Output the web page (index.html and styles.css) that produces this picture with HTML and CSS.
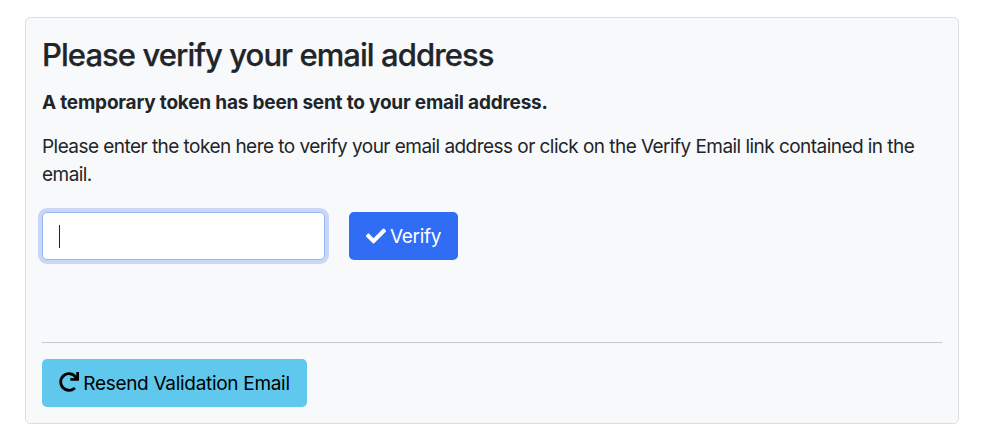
FILE: index.html
```html
<!DOCTYPE html>
<html lang="en">
<head>
<meta charset="utf-8">
<title>Verify email</title>
<link rel="stylesheet" href="styles.css">
</head>
<body>
<main class="card">
  <h1 class="title">Please verify your email address</h1>
  <p class="lead">A temporary token has been sent to your email address.</p>
  <p class="text">Please enter the token here to verify your email address or click on the Verify Email link contained in the email.</p>
  <div class="form-row">
    <div class="input" role="textbox" tabindex="0" aria-label="Token"><span class="caret"></span></div>
    <button class="btn btn-primary" type="button">
      <svg class="icon" viewBox="0 0 512 512" aria-hidden="true"><path fill="currentColor" d="M173.898 439.404l-166.4-166.4c-9.997-9.997-9.997-26.206 0-36.204l36.203-36.204c9.997-9.998 26.207-9.998 36.204 0L192 312.69 432.095 72.596c9.997-9.997 26.207-9.997 36.204 0l36.203 36.204c9.997 9.997 9.997 26.206 0 36.204l-294.4 294.401c-9.998 9.997-26.207 9.997-36.204-.001z"/></svg>
      <span>Verify</span>
    </button>
  </div>
  <hr class="divider">
  <button class="btn btn-info" type="button">
    <svg class="icon" viewBox="0 0 512 512" aria-hidden="true"><path fill="currentColor" d="M500.33 0h-47.41a12 12 0 0 0-12 12.57l4 82.76A247.42 247.42 0 0 0 256 8C119.34 8 7.9 119.53 8 256.19 8.1 393.07 119.1 504 256 504a247.1 247.1 0 0 0 166.18-63.91 12 12 0 0 0 .48-17.43l-34-34a12 12 0 0 0-16.38-.55A176 176 0 1 1 402.1 157.8l-101.53-4.87a12 12 0 0 0-12.57 12v47.41a12 12 0 0 0 12 12h200.33a12 12 0 0 0 12-12V12a12 12 0 0 0-12-12z"/></svg>
    <span>Resend Validation Email</span>
  </button>
</main>
</body>
</html>
```
FILE: styles.css
```css
* { box-sizing: border-box; }
body {
  margin: 0;
  padding: 17px 25px 0;
  background: #fff;
  color: #212529;
  font: 400 19px/28px Inter, "Liberation Sans", sans-serif;
}
.card {
  width: 934px;
  height: 407px;
  padding: 16px;
  border: 1px solid #dcdfe2;
  border-radius: 5px;
  background: #f8f9fb;
}
.title {
  margin: 0 0 14px;
  font-size: 31px;
  line-height: 41px;
  font-weight: 500;
  letter-spacing: -0.94px;
  white-space: nowrap;
  -webkit-text-stroke: 0.25px currentColor;
}
.lead {
  margin: 0 0 16px;
  font-weight: 700;
  letter-spacing: -0.2px;
}
.text {
  margin: 0 0 23px;
  letter-spacing: -0.546px;
}
.form-row {
  display: flex;
  gap: 24px;
  height: 48px;
}
.input {
  display: flex;
  align-items: center;
  width: 283px;
  padding: 0 16px;
  border: 1px solid #98b6f2;
  border-radius: 5px;
  background: #fff;
  box-shadow: 0 0 0 4px #c8d6f9;
  outline: none;
}
.caret {
  width: 1px;
  height: 23px;
  background: #212529;
}
.btn {
  display: flex;
  align-items: center;
  justify-content: center;
  gap: 4px;
  height: 48px;
  padding: 0;
  border: 0;
  border-radius: 5px;
  font: inherit;
  letter-spacing: -0.3px;
  white-space: nowrap;
}
.btn span {
  padding-top: 1px;
}
.btn-primary {
  width: 109px;
  background: #316df4;
  color: #fff;
}
.btn-info {
  width: 265px;
  background: #5fc8ec;
  color: #000;
}
.icon {
  width: 20px;
  height: 20px;
  flex: none;
}
.btn-info .icon {
  margin-top: -2px;
}
.divider {
  height: 1px;
  margin: 82px 0 16px;
  border: 0;
  background: #c5c7ca;
}
```
